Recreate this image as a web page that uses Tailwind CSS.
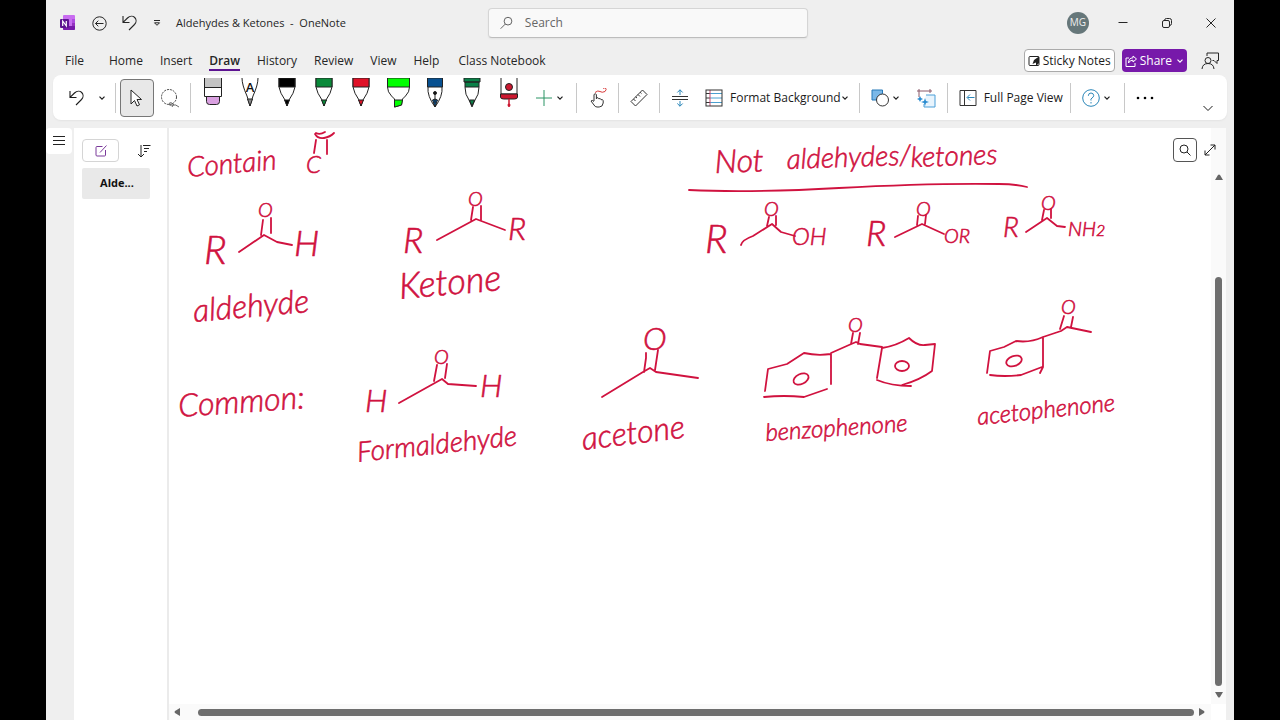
<!DOCTYPE html>
<html lang="en">
  <head>
    <meta charset="UTF-8" />
    <meta name="viewport" content="width=device-width, initial-scale=1.0" />
    <script src="https://cdn.jsdelivr.net/npm/@tailwindcss/browser@4"></script>
    <title>Aldehydes &amp; Ketones - OneNote</title>
  </head>
  <body class="bg-black px-[46px] font-['Open_Sans',sans-serif] text-xs text-[#262626]">
    <!-- shared icons -->
    <svg class="hidden">
      <symbol id="chevron" viewBox="0 0 8 8">
        <path d="M1.5 2.7L4 5.2l2.5-2.5" fill="none" stroke="currentColor" stroke-width="1.2" />
      </symbol>
      <symbol id="undo" viewBox="0 0 18 18">
        <path d="M2 2v6.500h6.500M2.300 8.200L6.500 4C9 1.600 12 1.800 13.700 3.500s2 4.700-.2 7L8 16" fill="none" stroke="currentColor" stroke-width="1.1" />
      </symbol>
    </svg>

    <div class="flex h-screen flex-col overflow-hidden bg-[#efefef]">
      <header class="flex h-[46px] shrink-0 items-center">
        <div class="flex w-[442px] shrink-0 items-center pl-[14px]">
          <svg class="size-4" viewBox="0 0 16 16">
            <rect x="3" y="0" width="12" height="15" rx="1" fill="#c86cf0" />
            <path d="M12 4h3v4h-3z" fill="#ae4be0" />
            <path d="M12 8h3v4h-3z" fill="#9332bf" />
            <path d="M3 11h12v3q0 1-1 1H4q-1 0-1-1z" fill="#7719aa" />
            <rect x="0" y="4" width="9" height="9" rx="1" fill="#5c1391" />
            <path d="M2.700 11V6l3.600 5V6" fill="none" stroke="#fff" stroke-width="1.2" />
          </svg>
          <button class="ml-4 size-[15px]" aria-label="Back">
            <svg viewBox="0 0 15 15" fill="none" stroke="currentColor">
              <circle cx="7.500" cy="7.500" r="6.700" />
              <path d="M11.500 7.500h-8M6.300 4.700L3.500 7.500l2.800 2.800" />
            </svg>
          </button>
          <button class="ml-[14px]" aria-label="Undo">
            <svg class="size-[18px]"><use href="#undo" /></svg>
          </button>
          <button class="ml-[14px] size-2" aria-label="Customize toolbar">
            <svg viewBox="0 0 8 8" fill="none" stroke="currentColor">
              <path d="M1 1.500h6M1.500 3.800h5L4 6.300z" />
            </svg>
          </button>
          <h1 class="ml-[15px] text-[11px] whitespace-pre">Aldehydes &amp; Ketones  -  OneNote</h1>
        </div>
        <label class="flex h-[30px] max-w-[320px] flex-1 items-center gap-3 rounded-sm border border-[#d5d5d5] border-b-[#bdbdbd] bg-[#f9f9f9] pl-[11px] shadow-xs">
          <svg class="size-[14px]" viewBox="0 0 14 14" fill="none" stroke="#555">
            <circle cx="8.700" cy="5" r="4.200" />
            <path d="M5.700 8.200L.7 13.200" />
          </svg>
          <input class="w-full placeholder:text-[#666] outline-none" type="text" placeholder="Search" aria-label="Search" />
        </label>
        <div class="ml-auto flex items-center pr-[17px]">
          <button class="flex size-[22px] items-center justify-center rounded-full bg-[#66777a] text-[10px] text-[#eee]">MG</button>
          <button class="ml-7 size-3" aria-label="Minimize">
            <svg viewBox="0 0 12 12" stroke="currentColor"><path d="M1.500 5.500h9" /></svg>
          </button>
          <button class="ml-8 size-3" aria-label="Restore">
            <svg viewBox="0 0 12 12" fill="none" stroke="currentColor">
              <rect x="1.500" y="3.500" width="7" height="7" rx="1.500" />
              <path d="M3.500 3.500q0-2 2-2h3q2 0 2 2v3q0 2-2 2" />
            </svg>
          </button>
          <button class="ml-8 size-3" aria-label="Close">
            <svg viewBox="0 0 12 12" stroke="currentColor"><path d="M1.500 1.500l9 9M10.500 1.500l-9 9" /></svg>
          </button>
        </div>
      </header>

      <nav class="flex h-[29px] shrink-0 items-center gap-[17px] pl-[19px]">
        <button class="mr-2">File</button>
        <button>Home</button>
        <button>Insert</button>
        <button class="relative font-semibold after:absolute after:inset-x-0 after:-bottom-[2px] after:h-[2px] after:bg-[#5c1391]">Draw</button>
        <button>History</button>
        <button>Review</button>
        <button>View</button>
        <button>Help</button>
        <button class="ml-[2px]">Class Notebook</button>
        <div class="ml-auto flex items-center pr-[15px]">
          <button class="flex h-[23px] items-center gap-[3px] rounded-sm border border-[#aaa] bg-white px-[3px] text-[#1b1b1b]">
            <svg class="size-3" viewBox="0 0 12 12">
              <rect x="1" y="1.500" width="10" height="9" rx="1" fill="none" stroke="#222" />
              <path d="M11 1.500L6 5l-1.500 4L8 7.500V11l3-3z" fill="#222" />
            </svg>
            Sticky Notes
          </button>
          <button class="ml-[7px] flex h-[23px] items-center gap-[3px] rounded-sm bg-[#7719aa] px-[3px] text-white">
            <svg class="size-3" viewBox="0 0 12 12" fill="none" stroke="#fff">
              <path d="M4 3H1v8.500h9V8M8 1l3.500 3L8 7V5.200Q5 5 3.500 8 3.500 3 8 2.800z" />
            </svg>
            Share
            <svg class="ml-px size-2"><use href="#chevron" /></svg>
          </button>
          <button class="ml-[14px]" aria-label="Feedback">
            <svg class="size-[18px]" viewBox="0 0 18 18" fill="none" stroke="currentColor">
              <path d="M6 4V1h11.500v7.500H16v3l-3-3h-1.500" />
              <circle cx="7" cy="8.500" r="3" />
              <path d="M1 17q.5-5.500 6-5.500T13 17" />
            </svg>
          </button>
        </div>
      </nav>

      <section class="mx-[7px] mb-2 flex h-[45px] shrink-0 items-center rounded-lg bg-white pl-[7px] text-[#1b1b1b] shadow-xs">
        <button class="flex w-[34px] justify-center" aria-label="Undo">
          <svg class="size-[18px]"><use href="#undo" /></svg>
        </button>
        <button class="flex w-4 justify-center" aria-label="Undo history">
          <svg class="size-2"><use href="#chevron" /></svg>
        </button>
        <div class="mr-1 ml-[5px] h-[30px] w-px bg-[#c8c8c8]"></div>
        <button class="flex h-[38px] w-[34px] items-center justify-center rounded-sm border border-[#777] bg-[#e8e8e8]" aria-label="Select">
          <svg class="h-[18px] w-[14px]" viewBox="0 0 14 18" fill="#fff" stroke="#222">
            <path d="M1 1v14l3.500-3.500L7 17l2.500-1.200L7 10.500h4.500z" />
          </svg>
        </button>
        <button class="flex w-8 justify-center" aria-label="Lasso select">
          <svg class="size-5" viewBox="0 0 20 20" fill="none" stroke="#444">
            <circle cx="9" cy="9" r="7.500" stroke-dasharray="2 1" />
            <path d="M19 19q-3-3-7-2-3 1-3-1t3-1 0 4" stroke-width=".8" />
          </svg>
        </button>
        <div class="mr-[3px] ml-1 h-[30px] w-px bg-[#c8c8c8]"></div>

        <!-- pen gallery -->
        <button class="flex h-[39px] w-[37px] justify-center" aria-label="Eraser">
          <svg class="h-[30px] w-6" viewBox="0 0 24 30" stroke="#222">
            <path d="M3.500 0v18.500h17V0" fill="#fff" />
            <path d="M4 0h16v9H4z" fill="#c4c4c4" stroke="none" />
            <path d="M3.500 9.500h17" />
            <path d="M5.500 18.500h13v5q0 3-3 3h-7q-3 0-3-3z" fill="#d9a0e0" />
          </svg>
        </button>
        <button class="flex h-[39px] w-[37px] justify-center" aria-label="Ink to text pen">
          <svg class="h-[30px] w-6" viewBox="0 0 24 30" stroke="#222">
            <path d="M4 0q0 7 5 18l3 10 3-10q5-11 5-18" fill="#fff" />
            <path d="M9.500 21h5L12 28z" fill="#888" />
            <text x="12" y="14" text-anchor="middle" font-size="13" font-weight="600" fill="#111" stroke="none">A</text>
          </svg>
        </button>
        <button class="flex h-[39px] w-[37px] justify-center" aria-label="Black pen">
          <svg class="h-[30px] w-6" viewBox="0 0 24 30" stroke="#222">
            <path d="M4 0v9q1 6 6 13l2 6 2-6q5-7 6-13V0" fill="#fff" />
            <path d="M4 0h16v9H4zM9.500 22h5L12 28z" fill="#000" />
          </svg>
        </button>
        <button class="flex h-[39px] w-[37px] justify-center" aria-label="Green pen">
          <svg class="h-[30px] w-6" viewBox="0 0 24 30" stroke="#222">
            <path d="M4 0v9q1 6 6 13l2 6 2-6q5-7 6-13V0" fill="#fff" />
            <path d="M4 0h16v9H4zM9.500 22h5L12 28z" fill="#0a8a3a" />
          </svg>
        </button>
        <button class="flex h-[39px] w-[37px] justify-center" aria-label="Red pen">
          <svg class="h-[30px] w-6" viewBox="0 0 24 30" stroke="#222">
            <path d="M4 0v9q1 6 6 13l2 6 2-6q5-7 6-13V0" fill="#fff" />
            <path d="M4 0h16v9H4zM9.500 22h5L12 28z" fill="#e01228" />
          </svg>
        </button>
        <button class="flex h-[39px] w-[37px] justify-center" aria-label="Highlighter">
          <svg class="h-[30px] w-6" viewBox="0 0 24 30" stroke="#222">
            <path d="M1.500 0v9q0 5 4 9l3 3v8l7-2 1-6 3-3q4-4 4-9V0" fill="#fff" />
            <path d="M1.500 0h22v9h-22zM8.500 22h8l-1 5-7 2z" fill="#0f0" />
          </svg>
        </button>
        <button class="flex h-[39px] w-[37px] justify-center" aria-label="Fountain pen">
          <svg class="h-[30px] w-6" viewBox="0 0 24 30" stroke="#222">
            <path d="M5 0v9q-1 9 7 20 8-11 7-20V0" fill="#fff" />
            <path d="M4.500 0h15v9h-15zM9.500 22l2.500-1 2.500 1-2.500 7z" fill="#075090" />
            <path d="M12 16v9" />
            <circle cx="12" cy="15" r="1.500" fill="#111" />
          </svg>
        </button>
        <button class="flex h-[39px] w-[37px] justify-center" aria-label="Brush pen">
          <svg class="h-[30px] w-6" viewBox="0 0 24 30" stroke="#222">
            <path d="M5 9q0 8 4 13l3 7 3-7q4-5 4-13" fill="#fff" />
            <path d="M4 0h16v4H4zM5 4h14v5H5zM9.500 22h5L12 28z" fill="#0a8048" />
          </svg>
        </button>
        <button class="flex h-[39px] w-[37px] justify-center" aria-label="Laser pointer">
          <svg class="h-[30px] w-6" viewBox="0 0 24 30" stroke="#222">
            <path d="M4 0v16h16V0" fill="#fff" />
            <path d="M3.500 16h17v3q0 2-3 2h-11q-3 0-3-2z" fill="#cc1830" />
            <circle cx="12" cy="9" r="3.500" fill="#cc1830" />
            <path d="M12 21v8" stroke="#cc1830" stroke-width="1.500" />
            <circle cx="12" cy="27" r="1.500" fill="#cc1830" stroke="none" />
          </svg>
        </button>
        <button class="flex w-[45px] items-center gap-1 pl-[9px]" aria-label="Add pen">
          <svg class="size-4" viewBox="0 0 16 16" stroke="#2a9464"><path d="M8 0v16M0 8h16" /></svg>
          <svg class="size-2"><use href="#chevron" /></svg>
        </button>
        <div class="mx-1 h-[30px] w-px bg-[#c8c8c8]"></div>
        <button class="flex w-[33px] justify-center" aria-label="Draw with touch">
          <svg class="size-5" viewBox="0 0 20 20" fill="none" stroke="#333">
            <path d="M6 13V6.500q1.200-1.500 2.400 0V11M8.400 10q2-1 2.300.7 2-.7 2.300 1 2-.5 2.200 1V15q-.5 4-4 4H9q-2 0-3-2l-3-4q1-1.500 3 .500" />
            <path d="M7 4.500q3-2.500 5-1t5 0q2-2 .5-3.500-1.500-.5-2.500.5" stroke="#d83b3b" />
          </svg>
        </button>
        <div class="mx-1 h-[30px] w-px bg-[#c8c8c8]"></div>
        <button class="flex w-8 justify-center" aria-label="Ruler">
          <svg class="size-[18px]" viewBox="0 0 18 18" fill="none" stroke="#333">
            <path d="M1 12.500L12.500 1 17 5.500 5.500 17zM3.500 10l2 2M5.700 7.800l1.300 1.300M8 5.500l2 2M10.200 3.300l1.300 1.300" />
          </svg>
        </button>
        <div class="mx-1 h-[30px] w-px bg-[#c8c8c8]"></div>
        <button class="flex w-8 justify-center" aria-label="Insert space">
          <svg class="size-[18px]" viewBox="0 0 18 18" fill="none" stroke="#333">
            <path d="M1 7.500h16M1 10.500h16" />
            <path d="M9 6V.8M6.300 3.500L9 .8l2.700 2.700M9 12v5.200M6.300 14.500L9 17.200l2.700-2.700" stroke="#2a86b8" />
          </svg>
        </button>
        <button class="flex items-center pr-[6px] pl-[9px]">
          <svg class="size-[18px]" viewBox="0 0 18 18" fill="none" stroke="#333">
            <path d="M5 4.500h12M5 9h12M5 13.500h12" stroke="#4aa0d0" />
            <path d="M1 4.500h4M1 9h4M1 13.500h4" />
            <path d="M5 1v16" stroke="#c04a70" />
            <rect x="1" y="1" width="16" height="16" />
          </svg>
          <span class="ml-[7px]">Format Background</span>
          <svg class="size-2"><use href="#chevron" /></svg>
        </button>
        <div class="mx-1 h-[30px] w-px bg-[#c8c8c8]"></div>
        <button class="flex w-[45px] items-center gap-[3px] pl-[7px]" aria-label="Shapes">
          <svg class="size-[18px]" viewBox="0 0 18 18">
            <path d="M1 1h10.500v3.500L5 11H1z" fill="#7ab8e8" stroke="#2478b8" />
            <circle cx="11.500" cy="11" r="6" fill="#fff" stroke="#333" />
          </svg>
          <svg class="size-2"><use href="#chevron" /></svg>
        </button>
        <button class="flex w-[34px] justify-center" aria-label="Ink to shape">
          <svg class="size-5" viewBox="0 0 20 20" fill="none">
            <path d="M1 3h15M3 1v8M14 1v4" stroke="#8a5868" />
            <path d="M10 7h9v12H8v-3" fill="#e8f4fd" stroke="#4a9fd8" />
            <path d="M4 8l1 2 2 1-2 1-1 2-1-2-2-1 2-1zM9 10l1 3 3 1-3 1-1 3-1-3-3-1 3-1z" fill="#2b8cd0" />
          </svg>
        </button>
        <div class="mx-1 h-[30px] w-px bg-[#c8c8c8]"></div>
        <button class="flex items-center gap-[7px] pr-[3px] pl-[7px]">
          <svg class="size-[18px]" viewBox="0 0 18 18" fill="none" stroke="#333">
            <path d="M1 1.500h16v15H1zM5.500 1.500v15" />
            <path d="M15.500 8.500h-7M11 5.500l-3 3 3 3" stroke="#2a86b8" />
          </svg>
          Full Page View
        </button>
        <div class="mx-1 h-[30px] w-px bg-[#c8c8c8]"></div>
        <button class="flex w-[45px] items-center gap-[3px] pl-[7px]" aria-label="Help">
          <svg class="size-[18px]" viewBox="0 0 18 18" fill="none" stroke="#2a86b8">
            <circle cx="9" cy="9" r="8.300" />
            <path d="M6.300 6.800Q6.500 4 9 4t2.700 2.500Q11.700 8 10 9T9 11.500M9 13v1.500" />
          </svg>
          <svg class="size-2"><use href="#chevron" /></svg>
        </button>
        <div class="mx-1 h-[30px] w-px bg-[#c8c8c8]"></div>
        <button class="flex w-8 justify-center" aria-label="More">
          <svg class="h-1 w-[18px]" viewBox="0 0 18 4"><circle cx="2" cy="2" r="1.300" /><circle cx="9" cy="2" r="1.300" /><circle cx="16" cy="2" r="1.300" /></svg>
        </button>
        <button class="mt-5 mr-[13px] ml-auto" aria-label="Collapse ribbon">
          <svg class="size-3" viewBox="0 0 12 12" fill="none" stroke="currentColor"><path d="M1.500 4L6 8.500 10.500 4" /></svg>
        </button>
      </section>

      <main class="flex min-h-0 flex-1 pr-2">
        <div class="w-7 shrink-0">
          <button class="flex size-[26px] items-center justify-center rounded-sm bg-white" aria-label="Show notebooks">
            <svg class="size-3" viewBox="0 0 12 12" stroke="#222"><path d="M0 1.500h12M0 5.500h12M0 9.500h12" /></svg>
          </button>
        </div>
        <aside class="w-[95px] shrink-0 border-r-2 border-[#ebebeb] bg-white px-2 pt-[11px]">
          <div class="flex items-center">
            <button class="flex h-[23px] w-[37px] items-center justify-center rounded-sm border border-[#d5d5d5]" aria-label="Add page">
              <svg class="size-3" viewBox="0 0 12 12" fill="none" stroke="#7a3a9a">
                <path d="M7.500 1.500H2q-1 0-1 1V10q0 1 1 1h7.500q1 0 1-1V5M5 7.500L11.500.5" />
              </svg>
            </button>
            <button class="ml-[18px]" aria-label="Sort pages">
              <svg class="size-[14px]" viewBox="0 0 14 14" fill="none" stroke="#222">
                <path d="M4 1v12M1 10l3 3 3-3M6 1.500h7.500M7 4.500h5M7 7.500h3" />
              </svg>
            </button>
          </div>
          <button class="mt-[6px] h-[31px] w-[68px] rounded-xs bg-[#e9e9e9] pl-[2px] text-[11px] font-bold text-[#111]">Alde...</button>
        </aside>

        <div class="relative flex min-w-0 flex-1 flex-col bg-white">
          <div class="flex min-h-0 flex-1">
            <!-- page canvas -->
            <div class="min-w-0 flex-1 overflow-hidden">
              <svg class="h-[576px] w-[1040px]" viewBox="169 128 1040 576" fill="none" stroke="#d0123f" stroke-width="1.8" stroke-linecap="round" stroke-linejoin="round">
                <path d="M315 134q3 5 9 4t10-5M316 133q4 2 9-1M316 140l-2 13M327 140v14" />
                <!-- aldehyde, ketone -->
                <path d="M239 252l25-17 13 7 15 3M263 220l-2 15M271 218v15" />
                <path d="M437 240l39-21 29 11M473 207l-2 13M481 206v14" />
                <!-- acid, ester, amide -->
                <path d="M689 190q60 3 150-2t160-4q16 0 28 3" />
                <path d="M741 245q1-5 12-9l19-12 9 8 14 4M769 217l-2 9M776 216v9" />
                <path d="M895 237l27-13 22 10M918 216l-1 9M926 215l-1 9" />
                <path d="M1026 232l21-14 10 8 8 1M1044 210l-2 10M1051 209v9" />
                <!-- formaldehyde, acetone -->
                <path d="M399 403l43-24 6 5 28 2M437 365l-3 16M447 364l-2 14" />
                <path d="M602 397l41-25 7-4 6 4 42 6M646 353v5l-2 14M658 350l-3 20" />
                <!-- benzophenone -->
                <path d="M765 391l3-22 19-5 17-11q13 3 27 1v30M764 397q20-2 40 0l23-8M831 353l18-8 7-3 4 2 22 3M853 333l-2 11M860 333l-2 11" />
                <path d="M882 348l-5 30M882 348q14-2 27-10 8 8 16 7l10-1-3 27q-12 9-30 14M877 380q14 6 34 6" />
                <ellipse cx="801" cy="379" rx="8" ry="5" transform="rotate(-25 801 379)" />
                <ellipse cx="902" cy="366" rx="7" ry="5" />
                <!-- acetophenone -->
                <path d="M987 373l3-22 14-4 12-6q14 2 27-4v30l-3 6M990 375q14 2 31 0l21-8M1043 337l18-6 6-4 24 5M1064 316l-4 13M1073 317l-2 10" />
                <ellipse cx="1014" cy="361" rx="8" ry="5" transform="rotate(-20 1014 361)" />

                <!-- atoms and handwritten words -->
                <g class="font-['Lato',sans-serif] text-[32px] font-light italic" fill="#d0123f" stroke-width=".6">
                  <g class="text-[20px]">
                    <text x="258" y="217">O</text>
                    <text x="468" y="206">O</text>
                    <text x="764" y="216">O</text>
                    <text x="916" y="216">O</text>
                    <text x="1041" y="210">O</text>
                    <text x="434" y="364">O</text>
                    <text x="848" y="332">O</text>
                    <text x="1061" y="314">O</text>
                  </g>
                  <text x="643" y="350">O</text>
                  <text class="text-[24px]" x="306" y="173">C</text>
                  <text class="text-[40px]" x="204" y="264">R</text>
                  <text class="text-[36px]" x="294" y="256">H</text>
                  <text class="text-[36px]" x="403" y="253">R</text>
                  <text x="508" y="240">R</text>
                  <text class="text-[40px]" x="705" y="253">R</text>
                  <text class="text-[24px]" x="792" y="245">OH</text>
                  <text class="text-[36px]" x="866" y="246">R</text>
                  <text class="text-[20px]" x="944" y="243">OR</text>
                  <text class="text-[28px]" x="1003" y="237">R</text>
                  <text class="text-[20px]" x="1068" y="236">NH<tspan class="text-[16px]">2</tspan></text>
                  <text x="365" y="412">H</text>
                  <text x="480" y="397">H</text>

                  <text class="text-[28px]" x="188" y="177" transform="rotate(-5 188 177)">Contain</text>
                  <text x="194" y="322" transform="rotate(-5 194 322)">aldehyde</text>
                  <text class="text-[36px]" x="400" y="299" transform="rotate(-5 400 299)">Ketone</text>
                  <text x="715" y="173" transform="rotate(-2 715 173)">Not</text>
                  <text class="text-[28px]" x="787" y="169" transform="rotate(-2 787 169)">aldehydes/</text>
                  <text class="text-[28px]" x="911" y="167" transform="rotate(-2 911 167)">ketones</text>
                  <text x="179" y="417" transform="rotate(-4 179 417)">Common:</text>
                  <text class="text-[28px]" x="358" y="462" transform="rotate(-6 358 462)">Formaldehyde</text>
                  <text x="583" y="450" transform="rotate(-7 583 450)">acetone</text>
                  <text class="text-[24px]" x="766" y="441" transform="rotate(-4 766 441)">benzophenone</text>
                  <text class="text-[24px]" x="978" y="425" transform="rotate(-6 978 425)">acetophenone</text>
                </g>
              </svg>
            </div>
            <!-- vertical scrollbar -->
            <div class="flex w-[15px] shrink-0 flex-col items-center bg-[#fafafa] pt-[45px] text-[#666]">
              <svg class="size-2" viewBox="0 0 8 8" fill="currentColor"><path d="M0 7l3-5q1-1 2 0l3 5z" /></svg>
              <div class="mt-24 w-[7px] flex-1 rounded-full bg-[#6e6e6e]"></div>
              <svg class="my-[5px] size-2" viewBox="0 0 8 8" fill="currentColor"><path d="M0 1l3 5q1 1 2 0l3-5z" /></svg>
            </div>
          </div>
          <!-- horizontal scrollbar -->
          <div class="mr-[15px] flex h-4 shrink-0 items-center bg-[#fafafa] pr-[5px] pl-1 text-[#666]">
            <svg class="size-2" viewBox="0 0 8 8" fill="currentColor"><path d="M7 0L2 3q-1 1 0 2l5 3z" /></svg>
            <div class="mr-1 ml-[17px] h-[7px] flex-1 rounded-full bg-[#6e6e6e]"></div>
            <svg class="size-2" viewBox="0 0 8 8" fill="currentColor"><path d="M1 0l5 3q1 1 0 2L1 8z" /></svg>
          </div>
          <div class="absolute top-[10px] right-[10px] flex items-center gap-[7px]">
            <button class="flex size-6 items-center justify-center rounded-sm border border-[#555] bg-white" aria-label="Find on page">
              <svg class="size-3" viewBox="0 0 12 12" fill="none" stroke="#222"><circle cx="5" cy="5" r="4" /><path d="M8 8l3.500 3.500" /></svg>
            </button>
            <button aria-label="Full page">
              <svg class="size-3" viewBox="0 0 12 12" fill="none" stroke="#222"><path d="M1 11L11 1M6.500 1H11v4.500M1 6.500V11h4.500" /></svg>
            </button>
          </div>
        </div>
      </main>
    </div>
  </body>
</html>
